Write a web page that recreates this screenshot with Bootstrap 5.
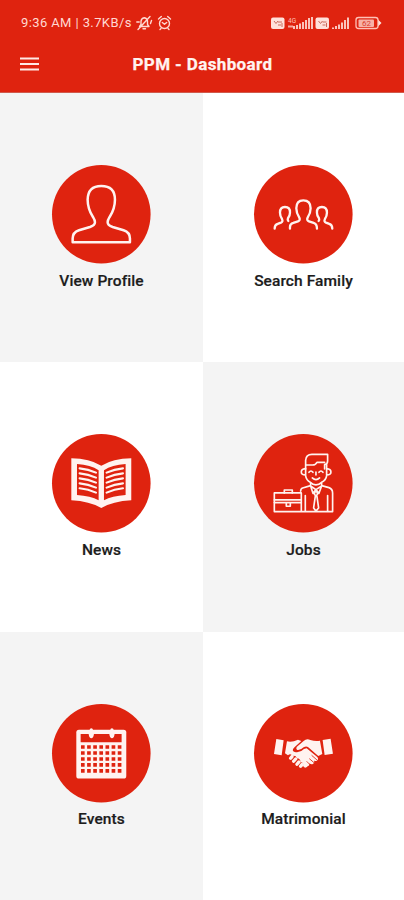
<!DOCTYPE html>
<html lang="en">
<head>
<meta charset="utf-8">
<meta name="viewport" content="width=device-width, initial-scale=1">
<title>PPM - Dashboard</title>
<link href="https://cdn.jsdelivr.net/npm/bootstrap@5.3.0/dist/css/bootstrap.min.css" rel="stylesheet">
<style>
:root { --brand: #df230f; --tile: #f4f4f4; }
body { font-family: Roboto, "Liberation Sans", sans-serif; color: #1c1c1c; height: 900px; overflow: hidden; }
.app-header { background: var(--brand); height: 93px; border-bottom: 1px solid #cf5a4c; }
.status-bar { height: 46px; padding: 0 21px; color: #ffd9d2; font-size: 13px; letter-spacing: .39px; line-height: 46px; }
.status-bar svg { flex: none; letter-spacing: 0; }
.title-bar { display: grid; grid-template-columns: 112px 1fr 112px; height: 36px; }
.title-bar h1 { font-size: 17px; font-weight: 700; color: #fff3f0; white-space: nowrap; letter-spacing: .38px; padding-left: 1px; -webkit-text-stroke: .25px currentColor; }
.menu-btn { margin-left: 20px; width: 19px; }
.tiles { display: grid; grid-template-columns: 203px 201px; grid-template-rows: 269px 269.5px 268.5px; }
.tile { padding-top: 72px; color: inherit; }
.tile.shade { background: var(--tile); }
.tile span { font-size: 15.5px; font-weight: 500; line-height: 20px; margin-top: 7px; letter-spacing: .09px; -webkit-text-stroke: .2px currentColor; }
.tile svg { width: 98.6px; height: 98.6px; overflow: visible; }
.disc { fill: var(--brand); }
.ln { fill: none; stroke: #fff3f0; stroke-linejoin: round; stroke-linecap: round; }
.sol { fill: #fff3f0; }
</style>
</head>
<body class="bg-white">
<header class="app-header">
  <div class="status-bar d-flex align-items-center">
    <span id="clock" class="text-nowrap">9:36 AM | 3.7KB/s</span>
    <svg class="ms-1" width="40" height="18" viewBox="0 0 40 18" fill="none" stroke="#ffd9d2" stroke-width="1.4" stroke-linecap="round" stroke-linejoin="round">
      <path d="M3.500 12.500h9.500l-1.500-2V7.500q0-3-3.200-3.700Q5.100 4.500 5 7.500v3zM7 14.800h2.500M2 15.500 14 2.500M.8 8h2.400M15.500 6.500l-1 3"/>
      <circle cx="28.500" cy="9.500" r="5"/><path d="m26.300 8.500 2.200 1.800 2.200-1.800M22.500 5l2.800-2.500M34.500 5l-2.800-2.500M25 14.500l-1 1M32 14.500l1 1"/>
    </svg>
    <svg class="ms-auto" width="113" height="18" viewBox="0 0 113 18">
      <g fill="#ffe1db">
        <rect x="1" y="3.500" width="13.500" height="11.500" rx="2"/>
        <rect x="45.500" y="3.500" width="13.500" height="11.500" rx="2"/>
        <path opacity=".85" d="M23 12h2v3h-2zM26 11h2v4h-2zM29 9.500h2V15h-2zM32 8h2v7h-2zM35 6h2v9h-2zM38 4h2v11h-2zM41 3h2v12h-2z"/>
        <path opacity=".85" d="M62 13.500h2V15h-2zM65 12h2v3h-2zM68 10.500h2V15h-2zM71 8.500h2V15h-2zM74 6h2v9h-2zM77 3.500h2V15h-2z"/>
        <path opacity=".7" d="M18 11.500h5v2h-5z"/>
        <rect x="88.500" y="5.500" width="15.500" height="7.500" rx="1" opacity=".75"/>
        <path d="m108 5.500 3.500 3.500-3.500 3.500z"/>
      </g>
      <rect x="86" y="3.500" width="22" height="11" rx="2.500" fill="none" stroke="#ffc1b6" stroke-width="1.300"/>
      <path d="m4 7 2 2.500L8 7M8 8h4M8 11h3M12 9v4M48.500 7l2 2.500 2-2.500M52.500 8h4M52.500 11h3M56.500 9v4" stroke="#c96b5d" fill="none"/>
      <text x="18" y="8.500" font-size="6.500" fill="#ffc1b6">4G</text>
      <text x="92" y="12" font-size="8" fill="#d9402e">62</text>
    </svg>
  </div>
  <div class="title-bar align-items-center">
    <svg class="menu-btn" height="16" viewBox="0 0 19 16"><path d="M0 2.500h19M0 8h19M0 13.500h19" stroke="#ffe9e5" stroke-width="2.200"/></svg>
    <h1 class="m-0 text-center">PPM - Dashboard</h1>
  </div>
</header>
<main class="tiles">
  <a class="tile shade d-flex flex-column align-items-center text-decoration-none">
    <svg viewBox="22 15 296 296"><circle class="disc" cx="170" cy="163" r="148"/>
      <path class="ln" stroke-width="7.500" d="M84 247V236Q84 217 103 211L136 201Q151 196 151 187Q151 181 145 171Q129 146 129 119Q130 78 170 78Q211 78 211 119Q211 146 195 171Q189 181 189 187Q189 196 204 201L237 211Q256 217 256 236V247Z"/></svg>
    <span>View Profile</span>
  </a>
  <a class="tile d-flex flex-column align-items-center text-decoration-none">
    <svg viewBox="22 15 296 296"><circle class="disc" cx="170" cy="163" r="148"/>
      <g class="ln" stroke-width="7"><path d="M130 206V201Q130 192 140 189L154 184Q162 181 158 173Q149 159 149 145Q149 121 170 121Q192 121 192 145Q192 159 183 173Q179 181 187 184L201 189Q211 192 211 206"/>
      <path d="M84 206Q84 195 93 192L103 188Q110 185 106 177Q100 167 100 158Q100 141 115 141Q131 141 130 158Q130 167 124 175Q122 180 125 183"/>
      <path d="M257 206Q257 195 248 192L238 188Q231 185 235 177Q241 167 241 158Q241 141 226 141Q210 141 211 158Q211 167 217 175Q219 180 216 183"/></g></svg>
    <span>Search Family</span>
  </a>
  <a class="tile d-flex flex-column align-items-center text-decoration-none">
    <svg viewBox="22 13 296 296"><circle class="disc" cx="170" cy="161" r="148"/>
      <path class="sol" d="M80 86Q135 87 170 108Q205 87 260 86V212Q205 215 170 235Q135 215 80 212Z"/>
      <path class="disc" d="M97 103Q138 105 162 122V212Q138 199 97 196ZM243 103Q202 105 178 122V212Q202 199 243 196Z"/>
      <path class="ln" stroke-width="6.500" d="M105 116Q131 118 154 129M105 131Q131 133 154 144M105 146Q131 148 154 159M105 161Q131 163 154 174M105 176Q131 178 154 189M235 116Q209 118 186 129M235 131Q209 133 186 144M235 146Q209 148 186 159M235 161Q209 163 186 174M235 176Q209 178 186 189"/></svg>
    <span>News</span>
  </a>
  <a class="tile shade d-flex flex-column align-items-center text-decoration-none">
    <svg viewBox="22 13 296 296"><circle class="disc" cx="170" cy="161" r="148"/>
      <g class="ln" stroke-width="5"><path d="M177 118V92Q178 74 196 74H243V94Q243 103 234 105V118M177 106H198Q207 106 211 98H234"/>
      <path d="M176 117Q164 118 164 127T177 136M240 117Q253 118 253 127T240 136M177 117V139Q179 152 191 158Q208 174 225 158Q238 152 240 139V105"/>
      <path d="M187 128Q193 120 199 128M217 128Q223 120 229 128M197 145Q208 155 219 145M208 127V136"/>
      <path d="M192 160V169L208 180L225 169V160M192 168L168 175Q162 177 162 185M225 168L247 174Q258 178 258 190V246H83V190H164V246M192 169L199 191L208 180L217 191L225 169M208 181L203 193L208 200L213 193ZM206 200L201 235L208 244L216 235L211 200M176 198V246M243 198V246"/>
      <path d="M83 211H164M83 219H164M113 190V181H137V190M119 219V230H131V219"/></g></svg>
    <span>Jobs</span>
  </a>
  <a class="tile shade d-flex flex-column align-items-center text-decoration-none">
    <svg viewBox="22 16 296 296"><circle class="disc" cx="170" cy="164" r="148"/>
      <rect class="sol" x="95" y="93" width="150" height="147" rx="8"/>
      <path class="disc" d="M108 106H132Q134 119 140 119T148 106H194Q196 119 202 119T210 106H231V131H108Z"/>
      <path class="ln" stroke-width="10" d="M140 94V111M202 94V111"/>
      <path fill="none" stroke="#df230f" stroke-width="11" stroke-dasharray="11 7.400" d="M109 145H232M109 163H232M109 181H232M109 199H232M109 217H232"/></svg>
    <span>Events</span>
  </a>
  <a class="tile d-flex flex-column align-items-center text-decoration-none">
    <svg viewBox="22 16 296 296"><circle class="disc" cx="170" cy="164" r="148"/>
      <path class="sol" d="M89 121L111 125L105 170L82 166ZM228 124L252 120L259 165L234 169Z"/>
      <path class="sol" d="M121 128Q136 132 154 123L164 127L142 147Q134 157 144 160Q160 164 172 151L180 149L212 175Q217 181 211 186Q208 189 202 186Q205 192 199 196Q194 199 188 194Q190 201 183 203Q179 208 174 207L169 202Q172 192 162 190Q161 180 151 179Q148 170 138 172Q132 163 124 170L115 164Z"/>
      <path class="sol" d="M150 145L171 127Q180 119 191 124Q207 129 220 126L227 166L215 172L184 145Q178 142 171 146Q160 156 152 154Q147 152 150 145Z"/>
      <g class="ln" stroke-width="10"><path d="M136 174L132 179M147 181L141 188M157 190L151 197M166 198L162 203"/></g>
      <path fill="none" stroke="#df230f" stroke-width="2.500" d="M188 180L202 192M180 188L191 199M195 170L211 184"/></svg>
    <span>Matrimonial</span>
  </a>
</main>
<script src="https://cdn.jsdelivr.net/npm/bootstrap@5.3.0/dist/js/bootstrap.bundle.min.js"></script>
</body>
</html>
